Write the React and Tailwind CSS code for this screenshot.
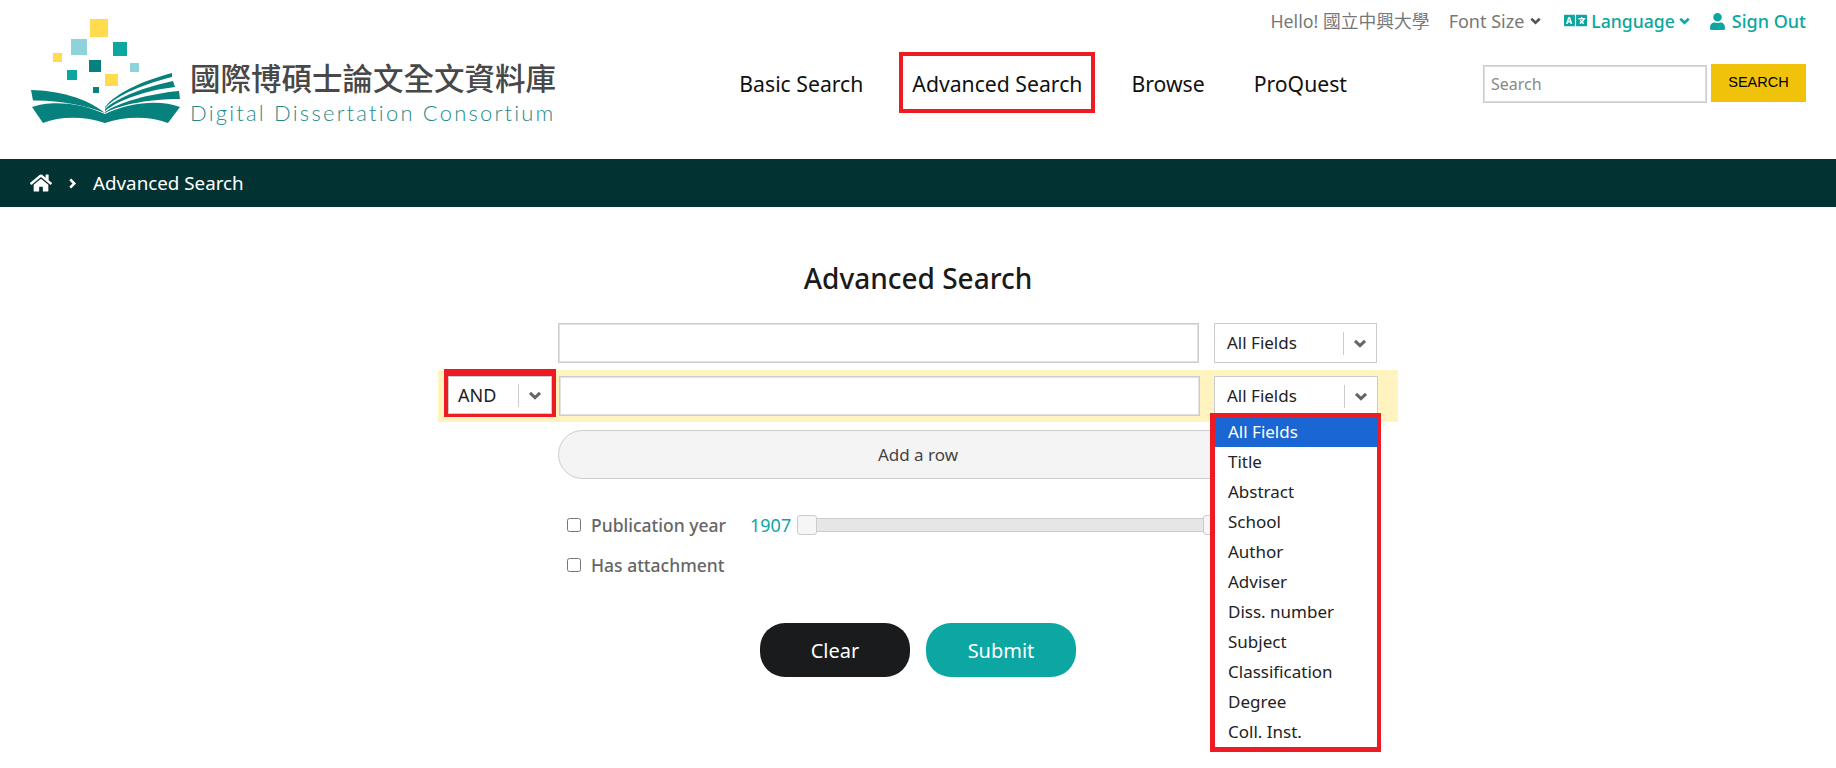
import { FaHome, FaLanguage, FaUser } from "react-icons/fa";

const fieldOptions = ["All Fields", "Title", "Abstract", "School", "Author", "Adviser", "Diss. number", "Subject", "Classification", "Degree", "Coll. Inst."];

function Chevron({ className }) {
  return (
    <svg viewBox="0 0 13 9" fill="none" stroke="currentColor" strokeWidth="3" className={className}>
      <path d="M1.5 1.8 L6.5 6.6 L11.5 1.8" />
    </svg>
  );
}

function Logo() {
  return (
    <div className="flex items-start">
      <svg width="154" height="110" viewBox="31 18 154 110" className="shrink-0 mt-[18px]">
        <rect x="90" y="19" width="18" height="18" fill="#ffdb4d" />
        <rect x="71" y="39" width="16" height="16" fill="#8ed3dc" />
        <rect x="113" y="42" width="14" height="14" fill="#0ca6a0" />
        <rect x="53" y="53" width="9" height="9" fill="#ffdb4d" />
        <rect x="89" y="60" width="12" height="12" fill="#07817d" />
        <rect x="67" y="70" width="10" height="10" fill="#0ca6a0" />
        <rect x="130" y="63" width="9" height="9" fill="#8ed3dc" />
        <rect x="105" y="74" width="13" height="12" fill="#ffdb4d" />
        <rect x="93" y="87" width="6" height="6" fill="#07817d" />
        <path d="M31 90 C58 91 85 97 105 113 C85 105 58 100 33 100.5 Z" fill="#07817d" />
        <path d="M32 107 C48 101 78 101 105 114 C132 101 162 100 180 107 L168 123 C150 116 125 116 105 123 C85 116 60 116 43 123 Z" fill="#07817d" />
        <path d="M105 112 C120 102 148 94 179 91 L180 99 C150 99 122 104 105 113 Z" fill="#07817d" />
        <path d="M105 109 C118 97 145 87 173 81 L175 87 C148 90 120 99 105 111 Z" fill="#07817d" />
        <path d="M105 107 C116 93 142 81 172 73 L172 77 C145 84 118 94 105 108 Z" fill="#07817d" />
      </svg>
      <div className="ml-[5px] mt-[56px]">
        <div className="text-[30.5px] leading-[42px] font-medium text-[#484848] font-['Noto_Sans_CJK_TC',sans-serif] whitespace-nowrap">國際博碩士論文全文資料庫</div>
        <div className="mt-[3px] text-[22px] leading-[24px] tracking-[2.2px] font-light text-[#1f8a8a] font-['Lato',sans-serif] whitespace-nowrap">Digital Dissertation Consortium</div>
      </div>
    </div>
  );
}

function SelectBox({ label, className }) {
  return (
    <div className={`${className} bg-white border border-[#ccc] flex items-center justify-between shrink-0`}>
      <span className="text-[#222]">{label}</span>
      <span className="flex items-center border-l border-[#ccc] h-[23px] pl-[9px] pr-[9px]">
        <Chevron className="w-[14px] h-[9px] text-[#666]" />
      </span>
    </div>
  );
}

export default function App() {
  return (
    <div className="h-[768px] overflow-hidden bg-white text-[17px] text-[#222] font-['Noto_Sans','Noto_Sans_CJK_TC',sans-serif]">
      <header className="h-[159px] flex justify-between pl-[31px] pr-[30px]">
        <Logo />
        <div className="flex flex-col items-end">
          <div className="flex items-center h-[42px] text-[18px] text-[#777]">
            <span className="text-[17.8px]">Hello! 國立中興大學</span>
            <span className="ml-[19px] flex items-center gap-[6px]">Font Size <Chevron className="w-[11px] h-[8px] text-[#555]" /></span>
            <span className="ml-[23px] flex items-center gap-[4px] text-[#0ca6a0] font-medium text-[17.6px]"><FaLanguage className="text-[23px]" />Language <Chevron className="w-[11px] h-[8px]" /></span>
            <span className="ml-[19px] flex items-center gap-[6px] text-[#0ca6a0] font-medium"><FaUser className="text-[17px]" />Sign Out</span>
          </div>
          <div className="flex items-start mt-[10px]">
            <nav className="flex items-center h-[61px] text-[21.2px] text-[#111] mr-[136px] pt-[3px]">
              <a>Basic Search</a>
              <a className="-mt-[3px] h-[61px] flex items-center pt-[3px] px-[9px] mx-[36px] border-4 border-[#ed1c24]">Advanced Search</a>
              <a>Browse</a>
              <a className="ml-[49px]">ProQuest</a>
            </nav>
            <input placeholder="Search" className="w-[224px] h-[38px] mt-[13px] border border-[#ccc] shadow-[inset_0_0_0_1px_#ddd] px-[7px] text-[16px] placeholder:text-[#888]" />
            <button className="w-[95px] h-[38px] mt-[12px] ml-[4px] bg-[#f0c30a] text-[14.5px] text-black font-['Liberation_Sans',sans-serif]">SEARCH</button>
          </div>
        </div>
      </header>

      <div className="h-[48px] bg-[#033232] flex items-center pl-[30px] text-white text-[18.8px]">
        <FaHome className="text-[22px]" />
        <Chevron className="w-[11px] h-[9px] -rotate-90 ml-[15px] mr-[15px]" />
        <span>Advanced Search</span>
      </div>

      <main className="w-[960px] ml-[438px] pt-[49px] relative">
        <h1 className="w-[720px] ml-[120px] text-center text-[28px] leading-[44px] font-medium text-[#1a1a1a]">Advanced Search</h1>

        <div className="flex mt-[23px] pl-[120px] pr-[21px] gap-[15px]">
          <input className="flex-1 h-[40px] border border-[#ccc] shadow-[inset_0_0_0_1px_#e2e2e2]" />
          <SelectBox label="All Fields" className="w-[163px] h-[40px] pl-[12px]" />
        </div>

        <div className="flex items-center h-[52px] mt-[7px] bg-[#fff3bf] pl-[6px] pr-[20px]">
          <div className="border-x-4 border-t-[7px] border-b-[3px] border-[#ed1c24] mr-[3px] -mt-[6px] text-[18px]">
            <SelectBox label="AND" className="w-[104px] h-[38px] pl-[9px]" />
          </div>
          <input className="flex-1 h-[40px] bg-white border border-[#ccc] shadow-[inset_0_0_0_1px_#e2e2e2] mr-[14px]" />
          <SelectBox label="All Fields" className="w-[164px] h-[40px] pl-[12px]" />
        </div>

        <button className="block w-[720px] h-[49px] ml-[120px] mt-[8px] rounded-full bg-[#f4f4f4] border border-[#ccc] text-[#444] text-[17px]">Add a row</button>

        <div className="ml-[129px] mt-[32px] flex items-center h-[28px]">
          <input type="checkbox" className="w-[14px] h-[14px] shrink-0" />
          <span className="ml-[10px] w-[136px] text-[#666] font-medium text-[17.5px] whitespace-nowrap">Publication year</span>
          <span className="ml-[23px] w-[47px] text-[#0ca6a3] text-[18px]">1907</span>
          <div className="flex items-center">
            <div className="w-[20px] h-[20px] rounded-[3px] bg-[#f6f6f6] border border-[#ccc]" />
            <div className="w-[386px] h-[14px] bg-[#e6e6e6] border-y border-[#ccc]" />
            <div className="w-[20px] h-[20px] rounded-[3px] bg-[#f6f6f6] border border-[#ccc]" />
          </div>
        </div>

        <div className="ml-[129px] mt-[12px] flex items-center h-[28px]">
          <input type="checkbox" className="w-[14px] h-[14px] shrink-0" />
          <span className="ml-[10px] text-[#666] font-medium text-[17.5px]">Has attachment</span>
        </div>

        <div className="w-[720px] ml-[120px] mt-[44px] flex justify-center gap-[16px]">
          <button className="w-[150px] h-[54px] pt-[1px] rounded-[25px] bg-[#1a1b1d] text-white text-[20px]">Clear</button>
          <button className="w-[150px] h-[54px] pt-[1px] rounded-[25px] bg-[#0ca6a3] text-white text-[20px]">Submit</button>
        </div>

        <ul className="absolute left-[772px] top-[206px] w-[171px] border-4 border-l-[5px] border-b-[5px] border-[#ed1c24] bg-white">
          {fieldOptions.map((opt, i) => (
            <li key={opt} className={`h-[30px] leading-[30px] pl-[13px] ${i === 0 ? "bg-[#1a66d2] text-white" : "text-[#222]"}`}>{opt}</li>
          ))}
        </ul>
      </main>
    </div>
  );
}
